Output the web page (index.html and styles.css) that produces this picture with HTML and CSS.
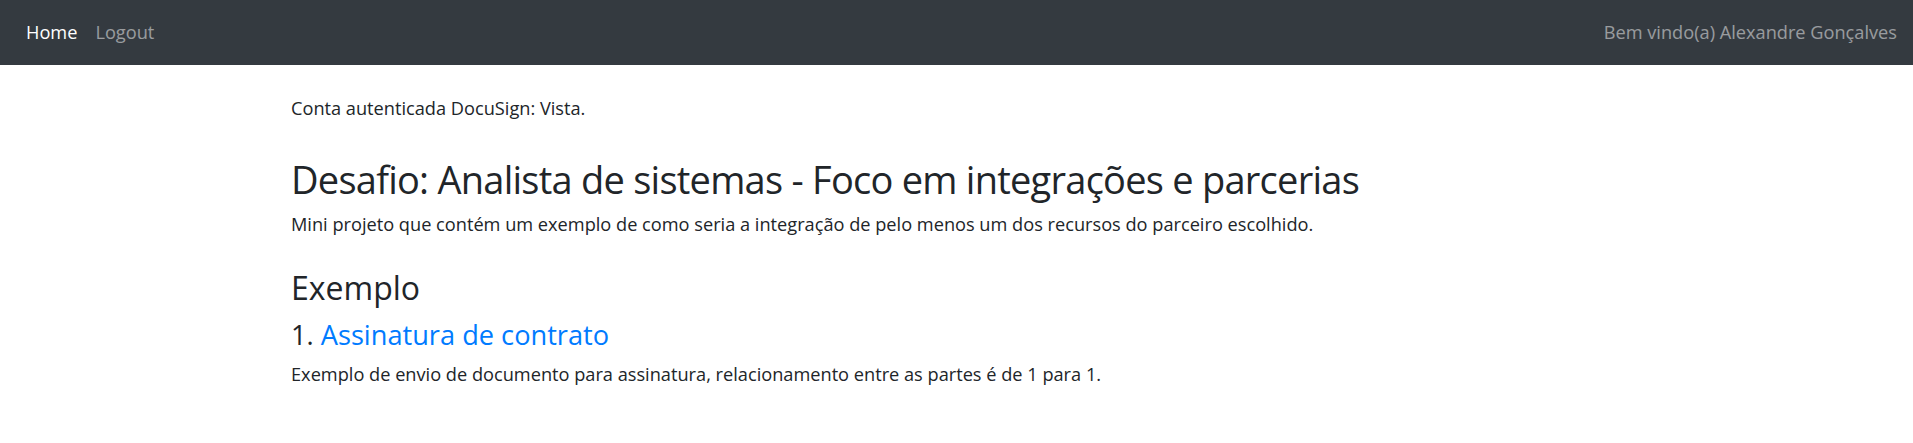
FILE: index.html
```html
<!DOCTYPE html>
<html lang="pt-BR">
<head>
<meta charset="utf-8">
<title>Desafio</title>
<link rel="stylesheet" href="styles.css">
</head>
<body>
<nav class="navbar">
  <ul class="nav-links">
    <li><a class="nav-link active" href="#">Home</a></li>
    <li><a class="nav-link" href="#">Logout</a></li>
  </ul>
  <span class="navbar-text">Bem vindo(a) Alexandre Gonçalves</span>
</nav>
<main class="container">
  <p class="status">Conta autenticada DocuSign: Vista.</p>
  <h1 class="title">Desafio: Analista de sistemas - Foco em integrações e parcerias</h1>
  <p class="lead-text">Mini projeto que contém um exemplo de como seria a integração de pelo menos um dos recursos do parceiro escolhido.</p>
  <h2 class="section-title">Exemplo</h2>
  <h3 class="example-title">1. <a href="#" class="example-link">Assinatura de contrato</a></h3>
  <p class="example-desc">Exemplo de envio de documento para assinatura, relacionamento entre as partes é de 1 para 1.</p>
</main>
</body>
</html>
```
FILE: styles.css
```css
* { box-sizing: border-box; }
html, body { margin: 0; padding: 0; }
body {
  font-family: "Segoe UI", "Open Sans", "Noto Sans", sans-serif;
  font-size: 18.2px;
  line-height: 27px;
  color: #212529;
  background: #fff;
}
.navbar {
  height: 65px;
  background: #343a40;
  display: flex;
  align-items: center;
  justify-content: space-between;
  padding: 0 16px 0 17px;
}
.nav-links {
  list-style: none;
  margin: 0;
  padding: 0;
  display: flex;
}
.nav-link {
  display: block;
  padding: 0 9px;
  color: rgba(255, 255, 255, 0.5);
  text-decoration: none;
}
.nav-link.active { color: #fff; }
.navbar-text { color: rgba(255, 255, 255, 0.5); }
.container {
  max-width: 1361px;
  margin: 0 auto;
  padding: 30px 15px 0;
}
.status { margin: 0; }
.title {
  margin: 34px 0 0;
  font-size: 38px;
  line-height: 46px;
  letter-spacing: -0.75px;
  font-weight: 400;
}
.lead-text { margin: 9px 0 0; }
.section-title {
  margin: 31px 0 0;
  font-size: 32px;
  line-height: 38px;
  font-weight: 400;
}
.example-title {
  margin: 11px 0 0;
  font-size: 27.2px;
  line-height: 33px;
  font-weight: 400;
}
.example-link { color: #007bff; text-decoration: none; }
.example-desc { margin: 10px 0 0; }
```
